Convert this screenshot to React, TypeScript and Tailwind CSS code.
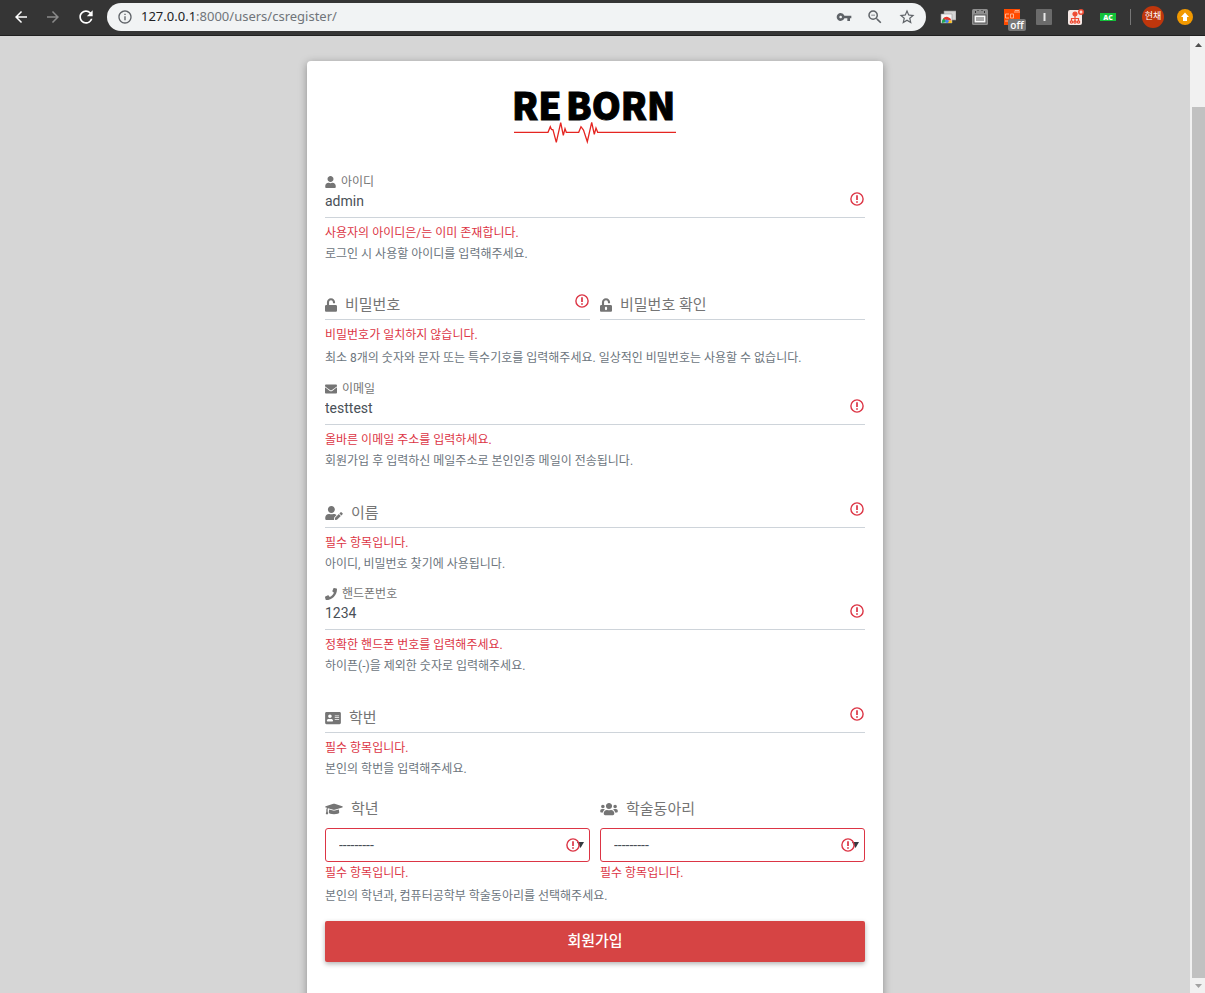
import React from 'react';
import {
  FaAddressCard,
  FaEnvelope,
  FaGraduationCap,
  FaPhone,
  FaUnlock,
  FaUnlockAlt,
  FaUser,
  FaUserEdit,
  FaUsers,
} from 'react-icons/fa';
import { MdArrowBack, MdArrowForward, MdRefresh, MdInfoOutline, MdVpnKey, MdStarBorder, MdZoomOut } from 'react-icons/md';

function WarningIcon() {
  return (
    <svg viewBox="0 0 14 14" className="h-3.5 w-3.5" fill="none" stroke="#dc3545" aria-hidden="true">
      <circle cx="7" cy="7" r="6.1" strokeWidth="1.4" />
      <path d="M7 3.2v4.7M7 9.2v1.6" strokeWidth="1.7" />
    </svg>
  );
}

function ErrorText({ children }: { children: React.ReactNode }) {
  return <p className="text-xs leading-[21px] text-[#dc3545]">{children}</p>;
}

function HelpText({ children }: { children: React.ReactNode }) {
  return <p className="text-xs leading-[21px] text-[#6c757d]">{children}</p>;
}

type FieldProps = {
  id: string;
  label: string;
  icon: React.ReactNode;
  type?: string;
  value?: string;
  invalid?: boolean;
  error?: string;
  help?: string;
};

function Field({ id, label, icon, type = 'text', value, invalid = true, error, help }: FieldProps) {
  const filled = value !== undefined;
  return (
    <div className="min-w-0">
      {filled && (
        <label htmlFor={id} className="flex h-5 items-center gap-[5px] text-xs text-[#757575]">
          {icon}
          {label}
        </label>
      )}
      <div className="grid grid-cols-1">
        <input
          id={id}
          type={type}
          defaultValue={value}
          className={
            'col-start-1 row-start-1 h-[26px] w-full border-b border-[#ced4da] bg-transparent text-sm font-normal text-[#495057] outline-none ' +
            (filled ? 'pb-2' : 'pb-0')
          }
        />
        {!filled && (
          <label
            htmlFor={id}
            className="col-start-1 row-start-1 flex h-[22px] items-center gap-2 self-start text-[15px] text-[#757575]"
          >
            {icon}
            {label}
          </label>
        )}
        {invalid && (
          <span className="pointer-events-none col-start-1 row-start-1 mr-px justify-self-end">
            <WarningIcon />
          </span>
        )}
      </div>
      {(error || help) && (
        <div className="mt-[5px]">
          {error && <ErrorText>{error}</ErrorText>}
          {help && <HelpText>{help}</HelpText>}
        </div>
      )}
    </div>
  );
}

function SelectField({ id, label, icon, error }: { id: string; label: string; icon: React.ReactNode; error: string }) {
  return (
    <div className="min-w-0">
      <label htmlFor={id} className="flex h-[22px] items-center gap-2 text-[15px] text-[#757575]">
        {icon}
        {label}
      </label>
      <div className="mt-2 mb-px grid grid-cols-1">
        <select
          id={id}
          className="col-start-1 row-start-1 h-[34px] w-full appearance-none rounded-[3px] border border-[#dc3545] bg-white px-[13px] text-sm text-[#495057]"
        >
          <option>---------</option>
        </select>
        <span className="pointer-events-none col-start-1 row-start-1 mr-1.5 flex items-center self-center justify-self-end">
          <svg viewBox="0 0 18 14" className="h-3.5 w-[18px]" aria-hidden="true">
            <path d="M11 4h7l-3.5 6z" fill="#343a40" />
            <circle cx="7" cy="7" r="6.1" fill="none" stroke="#dc3545" strokeWidth="1.4" />
            <path d="M7 3.2v4.7M7 9.2v1.6" stroke="#dc3545" strokeWidth="1.7" />
          </svg>
        </span>
      </div>
      <ErrorText>{error}</ErrorText>
    </div>
  );
}

function Logo() {
  return (
    <svg viewBox="0 0 162 54" className="mx-auto h-[54px] w-[162px] overflow-visible" role="img" aria-label="REBORN">
      <g
        fontFamily="'Noto Sans CJK KR', sans-serif"
        fontWeight="900"
        fontSize="37"
        fill="#000"
        stroke="#000"
        strokeWidth="1"
      >
        <text x="-2" y="29">
          RE
        </text>
        <text x="52" y="29">
          BORN
        </text>
      </g>
      <path
        d="M0 41.300H34L36.300 35.700 37.500 38.500 39 38.800 42.300 51.300 46.700 31.700 49.300 44.300 51 37.700 52.300 41.300H64.700L67 35.700 69.500 39 73.300 50.700 77.700 31.300 80.300 43.300 82 37 83.700 41.300H162"
        fill="none"
        stroke="#e52521"
        strokeWidth="1.300"
      />
    </svg>
  );
}

function Extensions() {
  return (
    <div className="flex items-center gap-4">
      <button aria-label="스크린샷" className="flex h-4 w-4 items-center">
        <svg viewBox="0 0 16 16" className="h-4 w-4">
          <path d="M4 2h12v9H4z" fill="#d5d5d5" stroke="#8b8b8b" strokeWidth=".6" />
          <path d="M1 5h11v9H1z" fill="#f5f5f5" stroke="#999" strokeWidth=".6" />
          <path d="M2 14a5 5 0 0 1 2-5l3 4z" fill="#23a455" />
          <path d="M3 9.500a5 5 0 0 1 8.500 2H7z" fill="#e33b2e" />
          <path d="M11.500 11.500q.5 1.500 0 2.500H7v-2z" fill="#fbc116" />
          <circle cx="7" cy="12.300" r="1.700" fill="#4285f4" />
        </svg>
      </button>
      <button aria-label="도구" className="h-4 w-4">
        <svg viewBox="0 0 16 16" className="h-4 w-4">
          <rect width="16" height="16" rx="1.500" fill="#8f8f8f" />
          <path d="M3.500 2v2M6 1v1M10 1v1M12.500 2v2" stroke="#333" />
          <rect x="2" y="6" width="12" height="8" fill="#fafafa" stroke="#555" />
          <rect x="4" y="8" width="8" height="4" fill="#aaa" />
        </svg>
      </button>
      <button aria-label="com off" className="relative h-4 w-4">
        <svg viewBox="0 0 16 16" className="h-4 w-4">
          <path d="M0 0h16v16H0z" fill="#ff4b00" />
          <path d="M5 5H1.500v4H5M6.500 5h3v4h-3zM11 4V1.500h4V4M13 1.500V4M1 12h3" fill="none" stroke="#ffb08b" />
        </svg>
        <span className="absolute top-[10px] left-1 flex h-3 w-[18px] items-center justify-center rounded-[2px] bg-[#777] font-['Open_Sans',sans-serif] text-[10px] font-semibold text-white">
          off
        </span>
      </button>
      <button aria-label="입력" className="h-4 w-4">
        <svg viewBox="0 0 16 16" className="h-4 w-4">
          <rect width="16" height="16" rx="1" fill="#6b6b6b" />
          <path d="M8.500 4v8" stroke="#e8e8e8" strokeWidth="2" />
        </svg>
      </button>
      <button aria-label="구조" className="h-4 w-4">
        <svg viewBox="0 0 16 16" className="h-4 w-4">
          <rect y="1" width="14" height="15" rx="2" fill="#f5e9e6" />
          <g fill="none" stroke="#ef4b32" strokeWidth="1.200">
            <circle cx="7" cy="5" r="2" fill="#ef4b32" />
            <path d="M7 7v6M3.500 12V9.500h7V12" />
            <circle cx="3.500" cy="13" r="1.200" />
            <circle cx="7" cy="13" r="1.200" />
            <circle cx="10.500" cy="13" r="1.200" />
          </g>
          <circle cx="13" cy="3" r="3" fill="#f04a32" />
          <path d="M13 1.500v3M11.500 3h3" stroke="#fff" strokeWidth="1.200" />
        </svg>
      </button>
      <button
        aria-label="AC"
        className="flex h-2 w-4 items-center justify-center bg-[#13c23a] font-['Open_Sans',sans-serif] text-[7px] leading-none font-extrabold text-white"
      >
        AC
      </button>
    </div>
  );
}

function BrowserBar() {
  return (
    <header className="flex h-9 shrink-0 items-center border-b border-[#202020] bg-[#353535] pr-3 pb-px pl-3">
      <nav className="flex items-center gap-3.5 text-white">
        <button aria-label="뒤로">
          <MdArrowBack className="h-[18px] w-[18px]" />
        </button>
        <button aria-label="앞으로" className="text-[#8a8a8a]">
          <MdArrowForward className="h-[18px] w-[18px]" />
        </button>
        <button aria-label="새로고침">
          <MdRefresh className="h-5 w-5" />
        </button>
      </nav>
      <div className="ml-[11px] flex h-7 min-w-0 flex-1 items-center rounded-full bg-[#f1f3f4] px-2.5 text-[#5f6368]">
        <MdInfoOutline className="h-4 w-4 shrink-0" />
        <div className="ml-2 min-w-0 flex-1 truncate font-['Noto_Sans',sans-serif] text-[13px] text-[#70757a]">
          <span className="text-[#202124]">127.0.0.1</span>:8000/users/csregister/
        </div>
        <div className="flex items-center gap-3.5">
          <MdVpnKey className="h-4 w-4" />
          <MdZoomOut className="h-[18px] w-[18px]" />
          <MdStarBorder className="h-[18px] w-[18px]" />
        </div>
      </div>
      <div className="ml-3.5 flex items-center">
        <Extensions />
        <span className="ml-3.5 h-4 w-px bg-[#777]" />
        <span className="ml-[11px] flex h-[22px] w-[22px] items-center justify-center rounded-full bg-[#bf360c] text-[9px] text-white">
          현채
        </span>
        <button aria-label="업데이트" className="ml-[13px] h-4 w-4">
          <svg viewBox="0 0 16 16" className="h-4 w-4">
            <circle cx="8" cy="8" r="8" fill="#f29900" />
            <path d="M8 3.500l4 4.500H10v4H6V8H4z" fill="#fff" />
          </svg>
        </button>
      </div>
    </header>
  );
}

function ScrollRail() {
  return (
    <div className="flex w-[15px] shrink-0 flex-col items-center bg-[#f1f1f1]" aria-hidden="true">
      <svg viewBox="0 0 15 17" className="h-[17px] w-[15px] shrink-0">
        <path d="M5 11l3.500-4 3.500 4z" fill="#505050" />
      </svg>
      <div className="mt-[54px] w-[13px] flex-1 self-end bg-[#c1c1c1]" />
      <svg viewBox="0 0 15 15" className="h-[15px] w-[15px] shrink-0">
        <path d="M5 6l3.500 4L12 6z" fill="#a3a3a3" />
      </svg>
    </div>
  );
}

export default function App() {
  return (
    <div className="flex h-screen flex-col font-[Roboto,'Noto_Sans_CJK_KR',sans-serif]">
      <BrowserBar />
      <div className="flex min-h-0 flex-1">
        <main className="min-w-0 flex-1 overflow-y-auto bg-[#d6d6d6] pt-[25px] [scrollbar-width:none]">
          <form
            className="mx-auto max-w-xl rounded-[4px] bg-white px-[18px] pt-[30px] pb-16 shadow-[0_2px_8px_rgba(0,0,0,0.35)]"
            onSubmit={(e) => e.preventDefault()}
          >
            <Logo />
            <div className="mt-[27px]">
              <Field
                id="user-id"
                label="아이디"
                icon={<FaUser className="h-3 w-[11px]" />}
                value="admin"
                error="사용자의 아이디은/는 이미 존재합니다."
                help="로그인 시 사용할 아이디를 입력해주세요."
              />
            </div>
            <div className="mt-[29px]">
              <div className="grid grid-cols-2 gap-2.5">
                <Field
                  id="password"
                  label="비밀번호"
                  type="password"
                  icon={<FaUnlock className="h-3.5 w-3" />}
                  error="비밀번호가 일치하지 않습니다."
                />
                <Field
                  id="password-confirm"
                  label="비밀번호 확인"
                  type="password"
                  invalid={false}
                  icon={<FaUnlockAlt className="h-3.5 w-3" />}
                />
              </div>
              <div className="mt-0.5">
                <HelpText>최소 8개의 숫자와 문자 또는 특수기호를 입력해주세요. 일상적인 비밀번호는 사용할 수 없습니다.</HelpText>
              </div>
            </div>
            <div className="mt-2.5">
              <Field
                id="email"
                label="이메일"
                icon={<FaEnvelope className="h-3 w-3" />}
                value="testtest"
                error="올바른 이메일 주소를 입력하세요."
                help="회원가입 후 입력하신 메일주소로 본인인증 메일이 전송됩니다."
              />
            </div>
            <div className="mt-[30px]">
              <Field
                id="name"
                label="이름"
                icon={<FaUserEdit className="h-3.5 w-[18px]" />}
                error="필수 항목입니다."
                help="아이디, 비밀번호 찾기에 사용됩니다."
              />
            </div>
            <div className="mt-[9px]">
              <Field
                id="phone"
                label="핸드폰번호"
                type="tel"
                icon={<FaPhone className="h-3 w-3" />}
                value="1234"
                error="정확한 핸드폰 번호를 입력해주세요."
                help="하이픈(-)을 제외한 숫자로 입력해주세요."
              />
            </div>
            <div className="mt-[30px]">
              <Field
                id="student-number"
                label="학번"
                icon={<FaAddressCard className="h-3.5 w-4" />}
                error="필수 항목입니다."
                help="본인의 학번을 입력해주세요."
              />
            </div>
            <div className="mt-[18px]">
              <div className="grid grid-cols-2 gap-2.5">
                <SelectField
                  id="grade"
                  label="학년"
                  icon={<FaGraduationCap className="h-3.5 w-[18px]" />}
                  error="필수 항목입니다."
                />
                <SelectField
                  id="club"
                  label="학술동아리"
                  icon={<FaUsers className="h-3.5 w-[18px]" />}
                  error="필수 항목입니다."
                />
              </div>
              <div className="mt-0.5">
                <HelpText>본인의 학년과, 컴퓨터공학부 학술동아리를 선택해주세요.</HelpText>
              </div>
            </div>
            <button
              type="submit"
              className="mt-3.5 h-[41px] w-full rounded-[2px] bg-[#d64444] text-[15px] font-medium text-white shadow-[0_2px_5px_rgba(0,0,0,0.3)]"
            >
              회원가입
            </button>
          </form>
        </main>
        <ScrollRail />
      </div>
    </div>
  );
}
